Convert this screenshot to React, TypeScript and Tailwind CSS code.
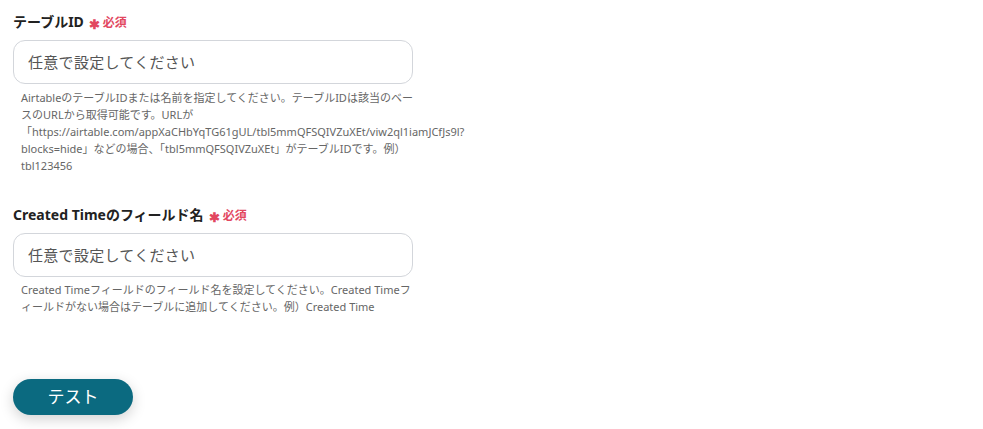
import React from "react";

const font = { fontFamily: '"Noto Sans", "Noto Sans CJK JP", sans-serif' };

function Label({ text }: { text: string }) {
  return (
    <div className="flex items-baseline h-[20px]">
      <span className="text-[14px] font-bold text-[#222] leading-[20px]">{text}</span>
      <span className="ml-[5px] text-[#e2475f] text-[13px] font-bold leading-[20px] relative top-[2px]">✱</span>
      <span className="ml-[3px] text-[#e2475f] text-[12px] font-bold leading-[20px]">必須</span>
    </div>
  );
}

function Input() {
  return (
    <div className="mt-[8px] w-[400px] h-[44px] rounded-[12px] border border-[#d3d6db] bg-white flex items-center px-[14px]">
      <span className="text-[15px] text-[#555] tracking-[0.3px]">任意で設定してください</span>
    </div>
  );
}

export default function App() {
  return (
    <div className="w-[983px] h-[429px] bg-white px-[13px] pt-[12px]" style={font}>
      <Label text="テーブルID" />
      <Input />
      <div className="mt-[5px] w-[400px] pl-[8px] text-[11px] leading-[17px] text-[#666]">
        AirtableのテーブルIDまたは名前を指定してください。テーブルIDは該当のベースのURLから取得可能です。URLが「https://airtable.com/appXaCHbYqTG61gUL/tbl5mmQFSQIVZuXEt/viw2ql1iamJCfJs9l?blocks=hide」などの場合、「tbl5mmQFSQIVZuXEt」がテーブルIDです。例）tbl123456
      </div>
      <div className="mt-[31px]">
        <Label text="Created Timeのフィールド名" />
      </div>
      <Input />
      <div className="mt-[4px] w-[400px] pl-[8px] text-[11px] leading-[17px] text-[#666]">
        Created Timeフィールドのフィールド名を設定してください。Created Timeフィールドがない場合はテーブルに追加してください。例）Created Time
      </div>
      <button className="mt-[64px] w-[120px] h-[36px] rounded-full bg-[#0b6a80] text-white text-[17px] shadow-[0_4px_14px_rgba(0,0,0,0.18)]">
        テスト
      </button>
    </div>
  );
}
